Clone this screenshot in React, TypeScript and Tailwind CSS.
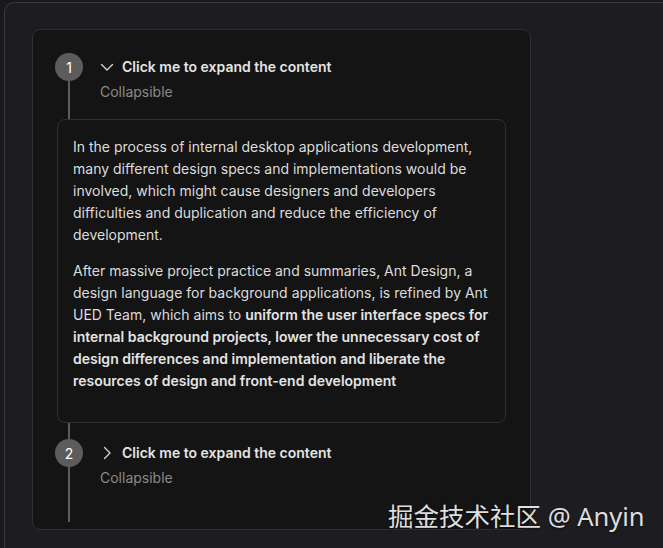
import React from "react";

const ChevronDown = () => (
  <svg width="14" height="14" viewBox="0 0 14 14" fill="none" stroke="currentColor" strokeWidth="1.3" strokeLinecap="round" strokeLinejoin="round">
    <path d="M1.5 4.5 7 10l5.5-5.5" />
  </svg>
);

const ChevronRight = () => (
  <svg width="14" height="14" viewBox="0 0 14 14" fill="none" stroke="currentColor" strokeWidth="1.3" strokeLinecap="round" strokeLinejoin="round">
    <path d="M4.5 1.5 10 7l-5.5 5.5" />
  </svg>
);

type StepProps = {
  index: number;
  open: boolean;
  last?: boolean;
  children?: React.ReactNode;
};

const Step = ({ index, open, last, children }: StepProps) => (
  <div className="flex">
    {/* rail */}
    <div className="flex w-7 shrink-0 flex-col items-center">
      <div className="flex h-7 w-7 items-center justify-center rounded-full bg-[#5c5c5c] text-[14px] text-white">
        {index}
      </div>
      <div className="w-[2px] flex-1 bg-[#5c5c5c]" />
    </div>

    <div className={"ml-[17px] flex-1 " + (last ? "pb-[32px]" : "pb-[16px]")}>
      <div className="flex h-[27px] items-center gap-[8px] text-[14px] font-semibold text-[#e4e4e4]">
        <span className="text-[#d8d8d8]">{open ? <ChevronDown /> : <ChevronRight />}</span>
        <span>Click me to expand the content</span>
      </div>
      <div className="text-[14px] leading-[24px] text-[#8a8a8a]">Collapsible</div>
      {children}
    </div>
  </div>
);

export default function App() {
  return (
    <div
      className="h-[548px] w-[663px] overflow-hidden bg-[#19191c] pl-[4px] pt-[2px]"
      style={{ fontFamily: "Inter, 'Noto Sans', sans-serif" }}
    >
      <div className="relative h-[600px] w-[700px] rounded-tl-[10px] border-l border-t border-[#38383d] bg-[#1d1d21] pl-[27px] pt-[26px]">
        <div className="w-[499px] rounded-[8px] border border-[#303030] bg-[#141414] pb-[7px] pl-[22px] pr-[24px] pt-[23px]">
          <Step index={1} open>
            <div className="relative z-10 ml-[-43px] mt-[15px] rounded-[8px] border border-[#303030] bg-[#141414] px-[15px] pb-[16px] pt-[16px] text-[14px] leading-[22px] text-[#dcdcdc]">
              <p className="mb-[14px]">
                In the process of internal desktop applications development, many different design specs and
                implementations would be involved, which might cause designers and developers difficulties and
                duplication and reduce the efficiency of development.
              </p>
              <p className="mb-[14px]">
                After massive project practice and summaries, Ant Design, a design language for background
                applications, is refined by Ant UED Team, which aims to{" "}
                <strong className="font-semibold text-[#e4e4e4]">
                  uniform the user interface specs for internal background projects, lower the unnecessary cost of
                  design differences and implementation and liberate the resources of design and front-end
                  development
                </strong>
              </p>
            </div>
          </Step>
          <Step index={2} open={false} last />
        </div>

        {/* watermark */}
        <div
          className="absolute left-[383px] top-[494px] whitespace-nowrap text-[25.5px] text-[#dedede]"
          style={{
            fontFamily: "'Noto Sans', 'Noto Sans CJK SC', sans-serif",
            textShadow: "0 1px 2px rgba(0,0,0,0.5)",
          }}
        >
          掘金技术社区 @ Anyin
        </div>
      </div>
    </div>
  );
}
